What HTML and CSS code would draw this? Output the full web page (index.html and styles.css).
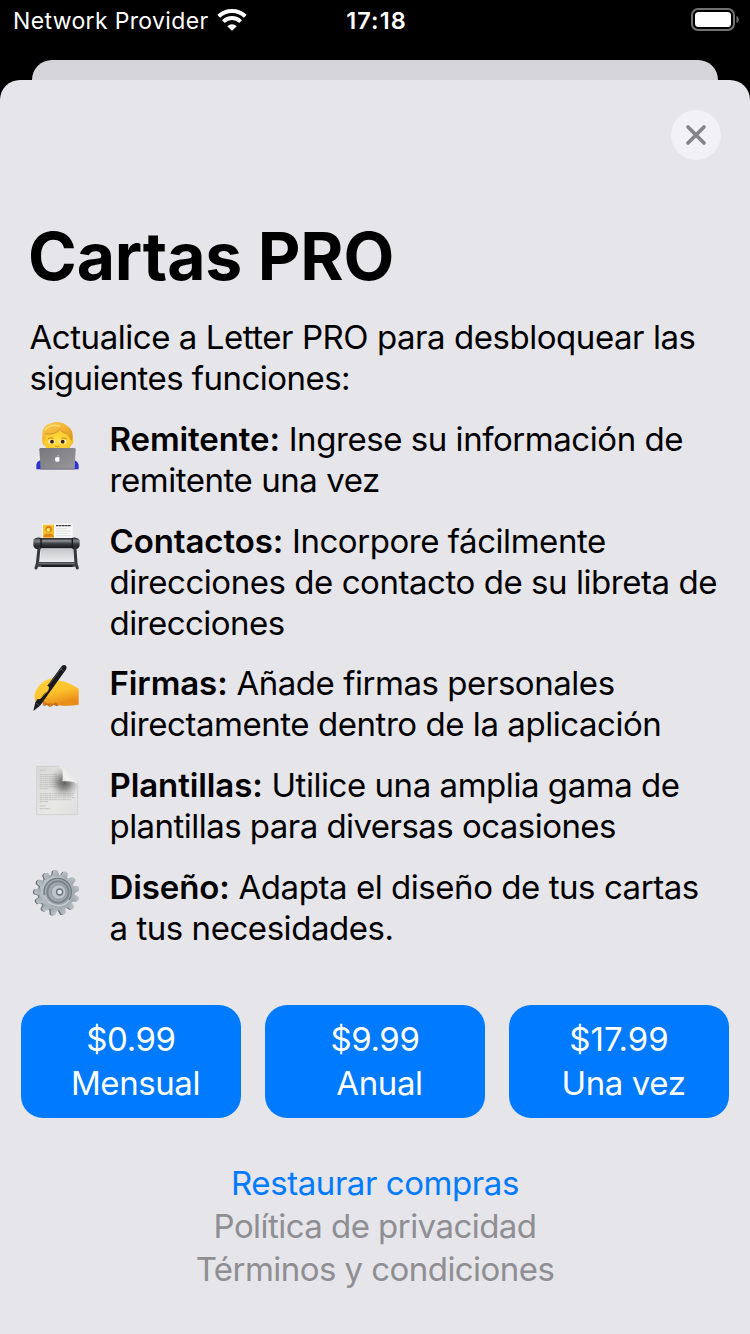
FILE: index.html
```html
<!DOCTYPE html>
<html lang="es">
<head>
<meta charset="utf-8">
<title>Cartas PRO</title>
<link rel="stylesheet" href="styles.css">
</head>
<body>
<div class="screen">
  <header class="status">
    <div class="carrier"><span class="provider">Network Provider</span>
      <svg class="wifi" viewBox="0 0 30 22" width="30" height="22" fill="none" stroke="#fff"><path d="M1.7 7.3C9 .3 21 .3 28.3 7.3" stroke-width="4"/><path d="M6.4 12.6C11.2 7.9 18.8 7.9 23.6 12.6" stroke-width="4"/><path d="M15 21.8L10.3 17.2C12.8 14.5 17.2 14.5 19.7 17.2Z" fill="#fff" stroke="none"/></svg>
    </div>
    <div class="time">17:18</div>
    <div class="battery"><svg viewBox="0 0 50 24" width="50" height="24"><rect x="2" y="1" width="42" height="21" rx="6" fill="none" stroke="#727272" stroke-width="2"/><rect x="5" y="4" width="36" height="15" rx="3.5" fill="#fff"/><path d="M46.5 8C49.5 9 49.5 14 46.5 15Z" fill="#727272"/></svg></div>
  </header>
  <div class="back-sheet"></div>
  <main class="sheet">
    <button class="close" aria-label="Cerrar"><svg viewBox="0 0 50 50" width="50" height="50"><path d="M17 17L33 33M33 17L17 33" stroke="#858489" stroke-width="3.7" stroke-linecap="round"/></svg></button>
    <h1 class="title">Cartas PRO</h1>
    <p class="intro"><span class="line">Actualice a Letter PRO para desbloquear las</span><span class="line tight">siguientes funciones:</span></p>
    <ul class="features">
      <li class="feature">
        <svg class="icon" viewBox="0 14 195 195">
          <defs>
            <radialGradient id="skin" cx=".5" cy=".4" r=".65"><stop offset="0" stop-color="#ffdf45"/><stop offset=".65" stop-color="#fdca2c"/><stop offset="1" stop-color="#e99a15"/></radialGradient>
            <linearGradient id="hair" x1="0" y1="0" x2="1" y2="1"><stop offset="0" stop-color="#f8cb50"/><stop offset=".5" stop-color="#f3b535"/><stop offset="1" stop-color="#dc921c"/></linearGradient>
            <linearGradient id="lid" x1="0" y1="0" x2="1" y2="1"><stop offset="0" stop-color="#77777b"/><stop offset="1" stop-color="#99999d"/></linearGradient>
          </defs>
          <path d="M34 165V151Q36 139 50 137H145Q159 140 161 152V165Z" fill="#2b35cf"/>
          <path d="M58 60Q49 66 52 84Q54 93 60 94Q69 123 98 123Q128 123 137 94Q145 91 145 78Q145 66 137 60L100 48Z" fill="url(#skin)"/>
          <path d="M54 75C48 52 55 29 82 26C92 19 119 24 130 37C144 47 146 62 140 80L135 74C133 66 128 61 120 58C113 56 109 52 105 48C97 59 83 63 66 62L59 80Z" fill="url(#hair)"/>
          <path d="M61 57C77 61 97 57 105 44C110 51 115 55 123 57" fill="none" stroke="#cf8b28" stroke-width="2.2"/>
          <path d="M59 48C68 33 88 30 105 36" fill="none" stroke="#ffda72" stroke-width="5"/>
          <path d="M69 73Q77 68 85 72M109 72Q117 68 125 73" fill="none" stroke="#b77120" stroke-width="2.5"/>
          <ellipse cx="80" cy="82" rx="10" ry="6.5" fill="#fff1c5"/><ellipse cx="114" cy="82" rx="10" ry="6.5" fill="#fff1c5"/><circle cx="81" cy="82" r="5.8" fill="#42210d"/><circle cx="113" cy="82" r="5.8" fill="#42210d"/>
          <path d="M90 95Q97 100 104 95" fill="none" stroke="#dda026" stroke-width="3"/>
          <path d="M43 105Q43 101 48 101H148Q152 101 152 105L149 165H47Z" fill="url(#lid)"/><path d="M46 164H150" stroke="#6a6a6e" stroke-width="2"/>
          <path d="M98 129Q101 126 104 130Q101 133 104 138Q101 144 97 142Q91 144 90 136Q89 127 97 129ZM97 127Q97 123 101 122Q101 126 97 127" fill="#fff"/>
        </svg>
        <p class="copy"><span class="line"><b>Remitente:</b> Ingrese su información de</span><span class="line">remitente una vez</span></p>
      </li>
      <li class="feature">
        <svg class="icon" viewBox="0 20 195 195">
          <defs><linearGradient id="roll" x1="0" y1="0" x2="0" y2="1"><stop offset="0" stop-color="#222427"/><stop offset=".3" stop-color="#85888a"/><stop offset=".55" stop-color="#3c3f42"/><stop offset="1" stop-color="#151719"/></linearGradient><linearGradient id="tray" x1="0" y1="0" x2="0" y2="1"><stop offset="0" stop-color="#c5c6c8"/><stop offset="1" stop-color="#efeff0"/></linearGradient></defs>
          <path d="M48 103H147V146H48Z" fill="url(#tray)"/>
          <rect x="51" y="28" width="92" height="50" fill="#f8f8f7"/><rect x="54" y="31" width="33" height="39" fill="#f5c22d"/><circle cx="71" cy="45" r="10" fill="#d77d10"/><path d="M55 69Q59 54 70 59Q84 53 87 69Z" fill="#df8618"/><circle cx="70" cy="47" r="6" fill="#ffe26a"/>
          <path d="M93 34H137" stroke="#38393b" stroke-width="4" stroke-dasharray="8 1"/><path d="M93 43H126M93 50H138M93 57H132M93 64H138" stroke="#d5d6d8" stroke-width="2"/>
          <rect x="31" y="71" width="127" height="31" rx="7" fill="url(#roll)"/>
          <path d="M25 76Q31 68 47 70V104Q29 107 25 94ZM142 70Q158 67 164 77V94Q160 107 142 104Z" fill="url(#roll)"/>
          <path d="M48 72V101M142 72V101" stroke="#191b1d" stroke-width="4"/><path d="M53 79H136" stroke="#898d8e" stroke-width="3"/>
          <path d="M42 102L37 148L33 161M150 102L153 148L157 161" fill="none" stroke="#35383a" stroke-width="9" stroke-linecap="round"/>
          <path d="M40 143H151L156 157H34Z" fill="#404345"/><path d="M41 147H149" stroke="#777a7c" stroke-width="3"/><path d="M48 158H144L142 153H50Z" fill="#17191a"/>
        </svg>
        <p class="copy"><span class="line"><b>Contactos:</b> Incorpore fácilmente</span><span class="line">direcciones de contacto de su libreta de</span><span class="line tight">direcciones</span></p>
      </li>
      <li class="feature firmas">
        <svg class="icon" viewBox="0 25 195 195">
          <defs><linearGradient id="hand" x1="0" y1="0" x2=".4" y2="1"><stop offset="0" stop-color="#ffd63e"/><stop offset=".6" stop-color="#fdc02c"/><stop offset="1" stop-color="#e78d18"/></linearGradient></defs>
          <path d="M50 130L54 151Q58 157 65 150L73 156Q80 158 85 150L96 155Q103 153 107 145Z" fill="#c76d19"/>
          <path d="M34 144Q26 131 30 116Q35 101 43 92Q62 74 80 71Q88 71 92 76L123 82Q142 90 161 102V150C141 154 119 155 99 151L92 143Q86 150 75 145Q66 151 57 139L47 129L40 143Z" fill="url(#hand)"/>
          <path d="M54 134Q63 128 73 135M57 141Q60 145 57 152M74 145Q79 149 76 155" fill="none" stroke="#e19621" stroke-width="3"/>
          <path d="M25 169L31 143L108 37Q114 28 121 32Q128 37 122 46L45 153Z" fill="#191a1d"/>
          <path d="M72 90L112 37" stroke="#55575c" stroke-width="2.5"/><path d="M31 144L44 153M106 42L117 50" stroke="#454649" stroke-width="3"/>
          <path d="M34 132Q32 114 46 101Q58 92 69 94Q75 98 69 108L56 119L44 134Z" fill="#fdc833"/><path d="M46 132Q55 120 70 107" fill="none" stroke="#eba323" stroke-width="3"/>
        </svg>
        <p class="copy"><span class="line"><b>Firmas:</b> Añade firmas personales</span><span class="line">directamente dentro de la aplicación</span></p>
      </li>
      <li class="feature">
        <svg class="icon" viewBox="0 17 195 195">
          <defs><linearGradient id="page" x1="0" y1="0" x2="1" y2="1"><stop offset="0" stop-color="#d7d7d6"/><stop offset=".6" stop-color="#e8e8e6"/><stop offset="1" stop-color="#dededc"/></linearGradient><radialGradient id="shade" gradientUnits="userSpaceOnUse" cx="118" cy="70" r="50"><stop offset="0" stop-color="#505050" stop-opacity=".9"/><stop offset=".35" stop-color="#6f6f6f" stop-opacity=".75"/><stop offset="1" stop-color="#bbb" stop-opacity="0"/></radialGradient><linearGradient id="fold" x1="0" y1="1" x2="1" y2="0"><stop offset="0" stop-color="#b5b5b5"/><stop offset=".4" stop-color="#f2f2f0"/><stop offset="1" stop-color="#d8d8d8"/></linearGradient></defs>
          <path d="M35 21H104L158 72V166H35Z" fill="url(#page)" stroke="#cacac9" stroke-width="2"/>
          <path d="M44 33H62M44 46H98M44 52H101M44 58H96M44 64H103M44 70H105M44 76H101M44 82H102M44 88H72M44 103H147M44 109H144M44 115H148M44 121H139M44 127H69M44 140H62M44 148H76" stroke="#bcbcbc" stroke-width="2.5" stroke-dasharray="8 1 5 1 11 1"/>
          <path d="M70 21H108L158 72V122H70Z" fill="url(#shade)"/>
          <path d="M100 21Q112 25 113 40Q114 52 112 66Q134 64 149 69Q156 72 158 81Q159 68 151 59Q125 29 119 25Q110 20 100 21Z" fill="url(#fold)"/>
        </svg>
        <p class="copy"><span class="line"><b>Plantillas:</b> Utilice una amplia gama de</span><span class="line tight">plantillas para diversas ocasiones</span></p>
      </li>
      <li class="feature">
        <svg class="icon" viewBox="0 17 195 195">
          <defs><linearGradient id="steel" x1="0" y1="0" x2="1" y2="1"><stop offset="0" stop-color="#c3cace"/><stop offset="1" stop-color="#9ba4aa"/></linearGradient><path id="tooth" d="M86 44L90 27Q97 22 104 27L108 44Z"/>
          <g id="cog"><circle cx="97" cy="93" r="54"/><use href="#tooth"/><use href="#tooth" transform="rotate(27.7 97 93)"/><use href="#tooth" transform="rotate(55.4 97 93)"/><use href="#tooth" transform="rotate(83.1 97 93)"/><use href="#tooth" transform="rotate(110.8 97 93)"/><use href="#tooth" transform="rotate(138.5 97 93)"/><use href="#tooth" transform="rotate(166.2 97 93)"/><use href="#tooth" transform="rotate(193.9 97 93)"/><use href="#tooth" transform="rotate(221.6 97 93)"/><use href="#tooth" transform="rotate(249.3 97 93)"/><use href="#tooth" transform="rotate(277 97 93)"/><use href="#tooth" transform="rotate(304.7 97 93)"/><use href="#tooth" transform="rotate(332.4 97 93)"/></g></defs>
          <use href="#cog" transform="translate(-5 2) rotate(-4 97 93)" fill="#697177"/>
          <use href="#cog" transform="translate(-1 1) rotate(-4 97 93)" fill="url(#steel)"/>
          <circle cx="98" cy="92" r="41" fill="#a2aab0" stroke="#737c82" stroke-width="4"/><circle cx="99" cy="92" r="32" fill="none" stroke="#7d868c" stroke-width="6"/><path d="M58 102A43 43 0 0 0 133 116" fill="none" stroke="#c7ced3" stroke-width="5"/>
          <circle cx="101" cy="92" r="22" fill="#bec6cc" stroke="#858e94" stroke-width="2.5"/><circle cx="104" cy="92" r="9" fill="#e1e3e7" stroke="#687178" stroke-width="4"/>
        </svg>
        <p class="copy"><span class="line"><b>Diseño:</b> Adapta el diseño de tus cartas</span><span class="line">a tus necesidades.</span></p>
      </li>
    </ul>
    <div class="plans">
      <button class="plan"><span>$0.99</span><span class="period">Mensual</span></button>
      <button class="plan"><span>$9.99</span><span class="period">Anual</span></button>
      <button class="plan"><span class="once-price">$17.99</span><span class="period">Una vez</span></button>
    </div>
    <nav class="links"><a class="restore">Restaurar compras</a><a>Política de privacidad</a><a>Términos y condiciones</a></nav>
  </main>
</div>
</body>
</html>
```
FILE: styles.css
```css
* { box-sizing: border-box; }
body { margin: 0; background: #000; }
.screen { width: 750px; height: 1334px; overflow: hidden; background: #000; font-family: Inter, "Liberation Sans", sans-serif; color: #000; display: flex; flex-direction: column; }
.status { height: 60px; padding: 0 10px 0 13px; display: grid; grid-template-columns: 1fr auto 1fr; color: #fff; flex: none; }
.carrier { display: flex; height: 40px; align-items: center; gap: 9px; font-size: 23px; white-space: nowrap; }
.provider { letter-spacing: .35px; padding-top: 2px; }
.time { line-height: 42px; font-size: 23.5px; font-weight: 600; letter-spacing: 1.1px; }
.battery { justify-self: end; padding-top: 8px; }
.battery svg { display: block; }
.back-sheet { height: 20px; margin: 0 32px; background: #d5d4d9; border-radius: 20px 20px 0 0; flex: none; }
.sheet { flex: 1; background: #e5e5ea; border-radius: 20px 20px 0 0; display: flex; flex-direction: column; }
.close { margin: 30px 29px 0 auto; width: 50px; height: 50px; padding: 0; border: 0; border-radius: 50%; background: #f2f1f7; }
.close svg { display: block; fill: none; }
.title { margin: 55px 0 0 28px; font-size: 66px; line-height: 82px; font-weight: 700; letter-spacing: -.15px; }
.intro { margin: 20px 0 0 29.5px; font-size: 33px; line-height: 41px; }
.line { display: block; white-space: nowrap; letter-spacing: -.45px; }
.line.tight { letter-spacing: -.54px; }
.features { list-style: none; margin: 20px 0 0; padding: 0 0 0 25px; }
.feature { display: flex; align-items: flex-start; gap: 19.5px; margin-bottom: 20px; font-size: 33px; line-height: 41px; }
.feature.firmas { margin-top: -1px; }
.icon { width: 65px; height: 65px; flex: none; overflow: visible; }
.copy { margin: 0; }
.copy b { font-weight: 600; letter-spacing: -.1px; }
.plans { display: flex; gap: 24px; margin: 36px 21px 0; }
.plan { width: 220px; height: 113px; border: 0; border-radius: 22px; background: #007aff; color: #fff; font: 33px/44px Inter, "Liberation Sans", sans-serif; letter-spacing: -.4px; padding: 0 0 2px; display: flex; flex-direction: column; align-items: center; justify-content: center; }
.once-price { letter-spacing: 0; }
.period { padding-left: 9px; }
.links { margin-top: 44px; display: flex; flex-direction: column; align-items: center; font-size: 33px; line-height: 43px; letter-spacing: -.55px; color: #8e8e93; }
.restore { color: #007aff; letter-spacing: -.43px; }
```
